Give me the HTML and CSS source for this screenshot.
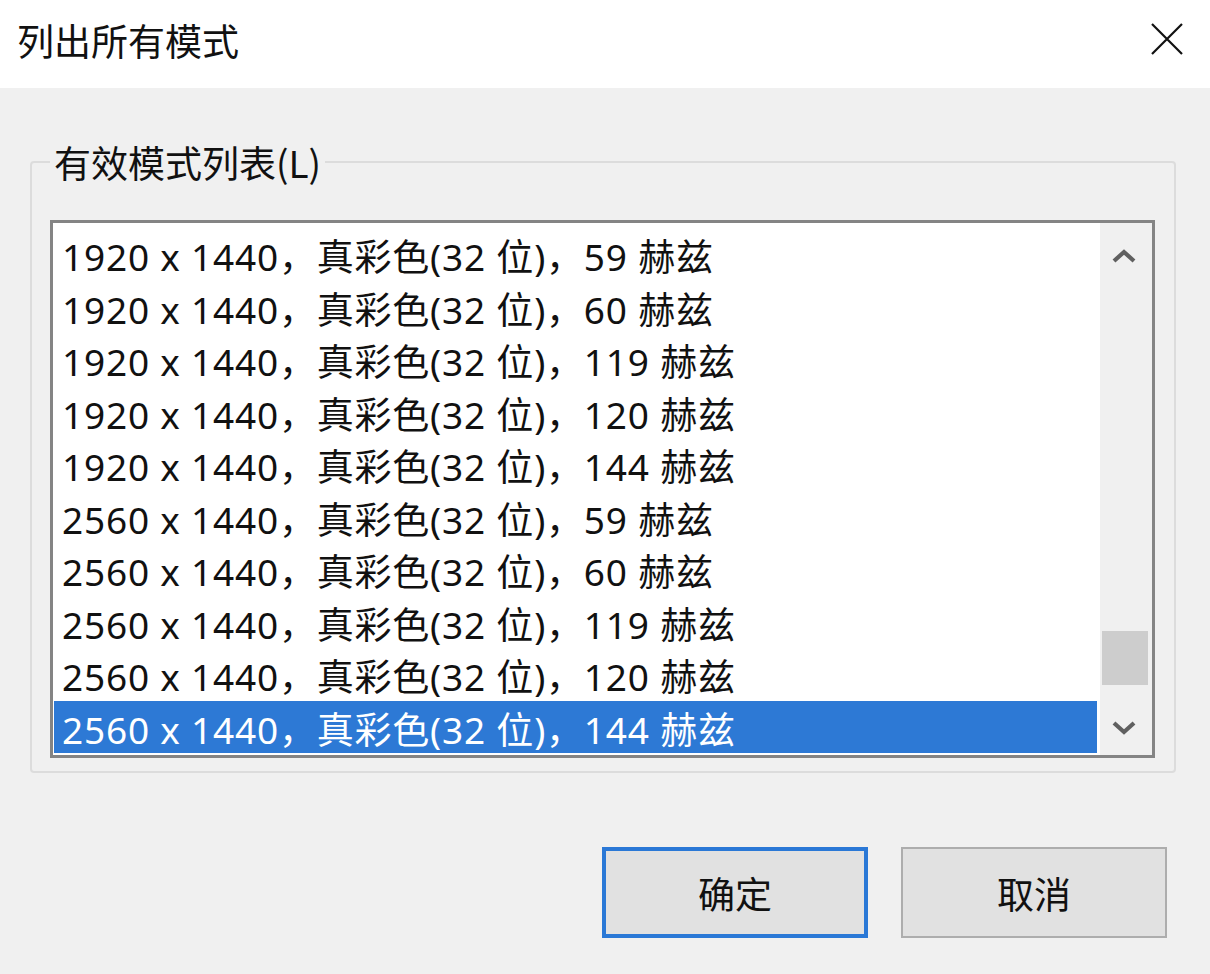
FILE: index.html
```html
<!DOCTYPE html>
<html lang="zh-CN">
<head>
<meta charset="utf-8">
<title>列出所有模式</title>
<link rel="stylesheet" href="styles.css">
</head>
<body>
<div class="dialog">
  <div class="titlebar">
    <span class="title">列出所有模式</span>
    <svg class="close" width="34" height="34" viewBox="0 0 34 34" aria-hidden="true">
      <path d="M2 2 L32 32 M32 2 L2 32" stroke="#111" stroke-width="2.2" fill="none"/>
    </svg>
  </div>
  <div class="body">
    <fieldset class="group">
      <legend class="group-label">有效模式列表(L)</legend>
      <div class="listbox">
        <div class="items">
          <div class="item">1920 x 1440，真彩色(32 位)，59 赫兹</div>
          <div class="item">1920 x 1440，真彩色(32 位)，60 赫兹</div>
          <div class="item">1920 x 1440，真彩色(32 位)，119 赫兹</div>
          <div class="item">1920 x 1440，真彩色(32 位)，120 赫兹</div>
          <div class="item">1920 x 1440，真彩色(32 位)，144 赫兹</div>
          <div class="item">2560 x 1440，真彩色(32 位)，59 赫兹</div>
          <div class="item">2560 x 1440，真彩色(32 位)，60 赫兹</div>
          <div class="item">2560 x 1440，真彩色(32 位)，119 赫兹</div>
          <div class="item">2560 x 1440，真彩色(32 位)，120 赫兹</div>
          <div class="item selected">2560 x 1440，真彩色(32 位)，144 赫兹</div>
        </div>
        <div class="scrollbar">
          <div class="sb-btn sb-up">
            <svg width="26" height="16" viewBox="0 0 26 16" aria-hidden="true">
              <path d="M3 13 L13 4 L23 13" stroke="#606060" stroke-width="4.2" fill="none"/>
            </svg>
          </div>
          <div class="sb-track">
            <div class="sb-thumb"></div>
          </div>
          <div class="sb-btn sb-down">
            <svg width="26" height="16" viewBox="0 0 26 16" aria-hidden="true">
              <path d="M3 3 L13 12 L23 3" stroke="#606060" stroke-width="4.2" fill="none"/>
            </svg>
          </div>
        </div>
      </div>
    </fieldset>
    <div class="buttons">
      <button class="btn btn-default">确定</button>
      <button class="btn">取消</button>
    </div>
  </div>
</div>
</body>
</html>
```
FILE: styles.css
```css
html, body {
  margin: 0;
  padding: 0;
}
body {
  width: 1210px;
  height: 974px;
  background: #f0f0f0;
  font-family: "Noto Sans CJK SC", "Noto Sans", sans-serif;
  color: #000;
  overflow: hidden;
}
.dialog {
  display: flex;
  flex-direction: column;
  height: 974px;
}
.titlebar {
  height: 88px;
  background: #fff;
  display: flex;
  align-items: center;
  justify-content: space-between;
  padding: 0 26px 8px 17px;
  box-sizing: border-box;
}
.title {
  font-size: 37px;
  line-height: 48px;
  color: #111;
}
.close {
  display: block;
  margin-top: -2px;
}
.body {
  flex: 1;
  display: flex;
  flex-direction: column;
}
.group {
  margin: 50px 34px 0 30px;
  padding: 34px 19px 13px 18px;
  border: 2px solid #dcdcdc;
  border-radius: 4px;
  min-width: 0;
}
.group-label {
  font-size: 37px;
  line-height: 48px;
  padding: 0 4px;
  margin-left: 0;
  color: #111;
}
.listbox {
  height: 538px;
  box-sizing: border-box;
  border: 3px solid #848484;
  background: #fff;
  display: flex;
}
.items {
  flex: 1;
  padding: 5px 3px 0 1px;
  overflow: hidden;
}
.item {
  height: 52.5px;
  line-height: 52.5px;
  box-sizing: border-box;
  padding-top: 3px;
  font-family: "Noto Sans", "Noto Sans CJK SC", sans-serif;
  font-size: 37px;
  letter-spacing: 0.8px;
  padding-left: 8px;
  white-space: nowrap;
  color: #111;
}
.item.selected {
  background: #2d79d5;
  color: #fff;
}
.scrollbar {
  width: 52px;
  background: #f0f0f0;
  display: flex;
  flex-direction: column;
}
.sb-btn {
  display: flex;
  align-items: center;
  justify-content: center;
  padding-right: 5px;
  box-sizing: border-box;
}
.sb-up {
  height: 60px;
  padding-top: 6px;
}
.sb-down {
  height: 56px;
  padding-top: 2px;
}
.sb-track {
  flex: 1;
  padding: 348px 4px 0 2px;
}
.sb-thumb {
  height: 54px;
  background: #cdcdcd;
}
.buttons {
  display: flex;
  justify-content: flex-end;
  gap: 33px;
  margin: 74px 43px 0 0;
}
.btn {
  width: 266px;
  height: 91px;
  box-sizing: border-box;
  background: #e1e1e1;
  border: 2px solid #adadad;
  font-family: "Noto Sans CJK SC", "Noto Sans", sans-serif;
  font-size: 37px;
  color: #111;
  padding: 0;
}
.btn-default {
  border: 4px solid #2a78d6;
}
```
